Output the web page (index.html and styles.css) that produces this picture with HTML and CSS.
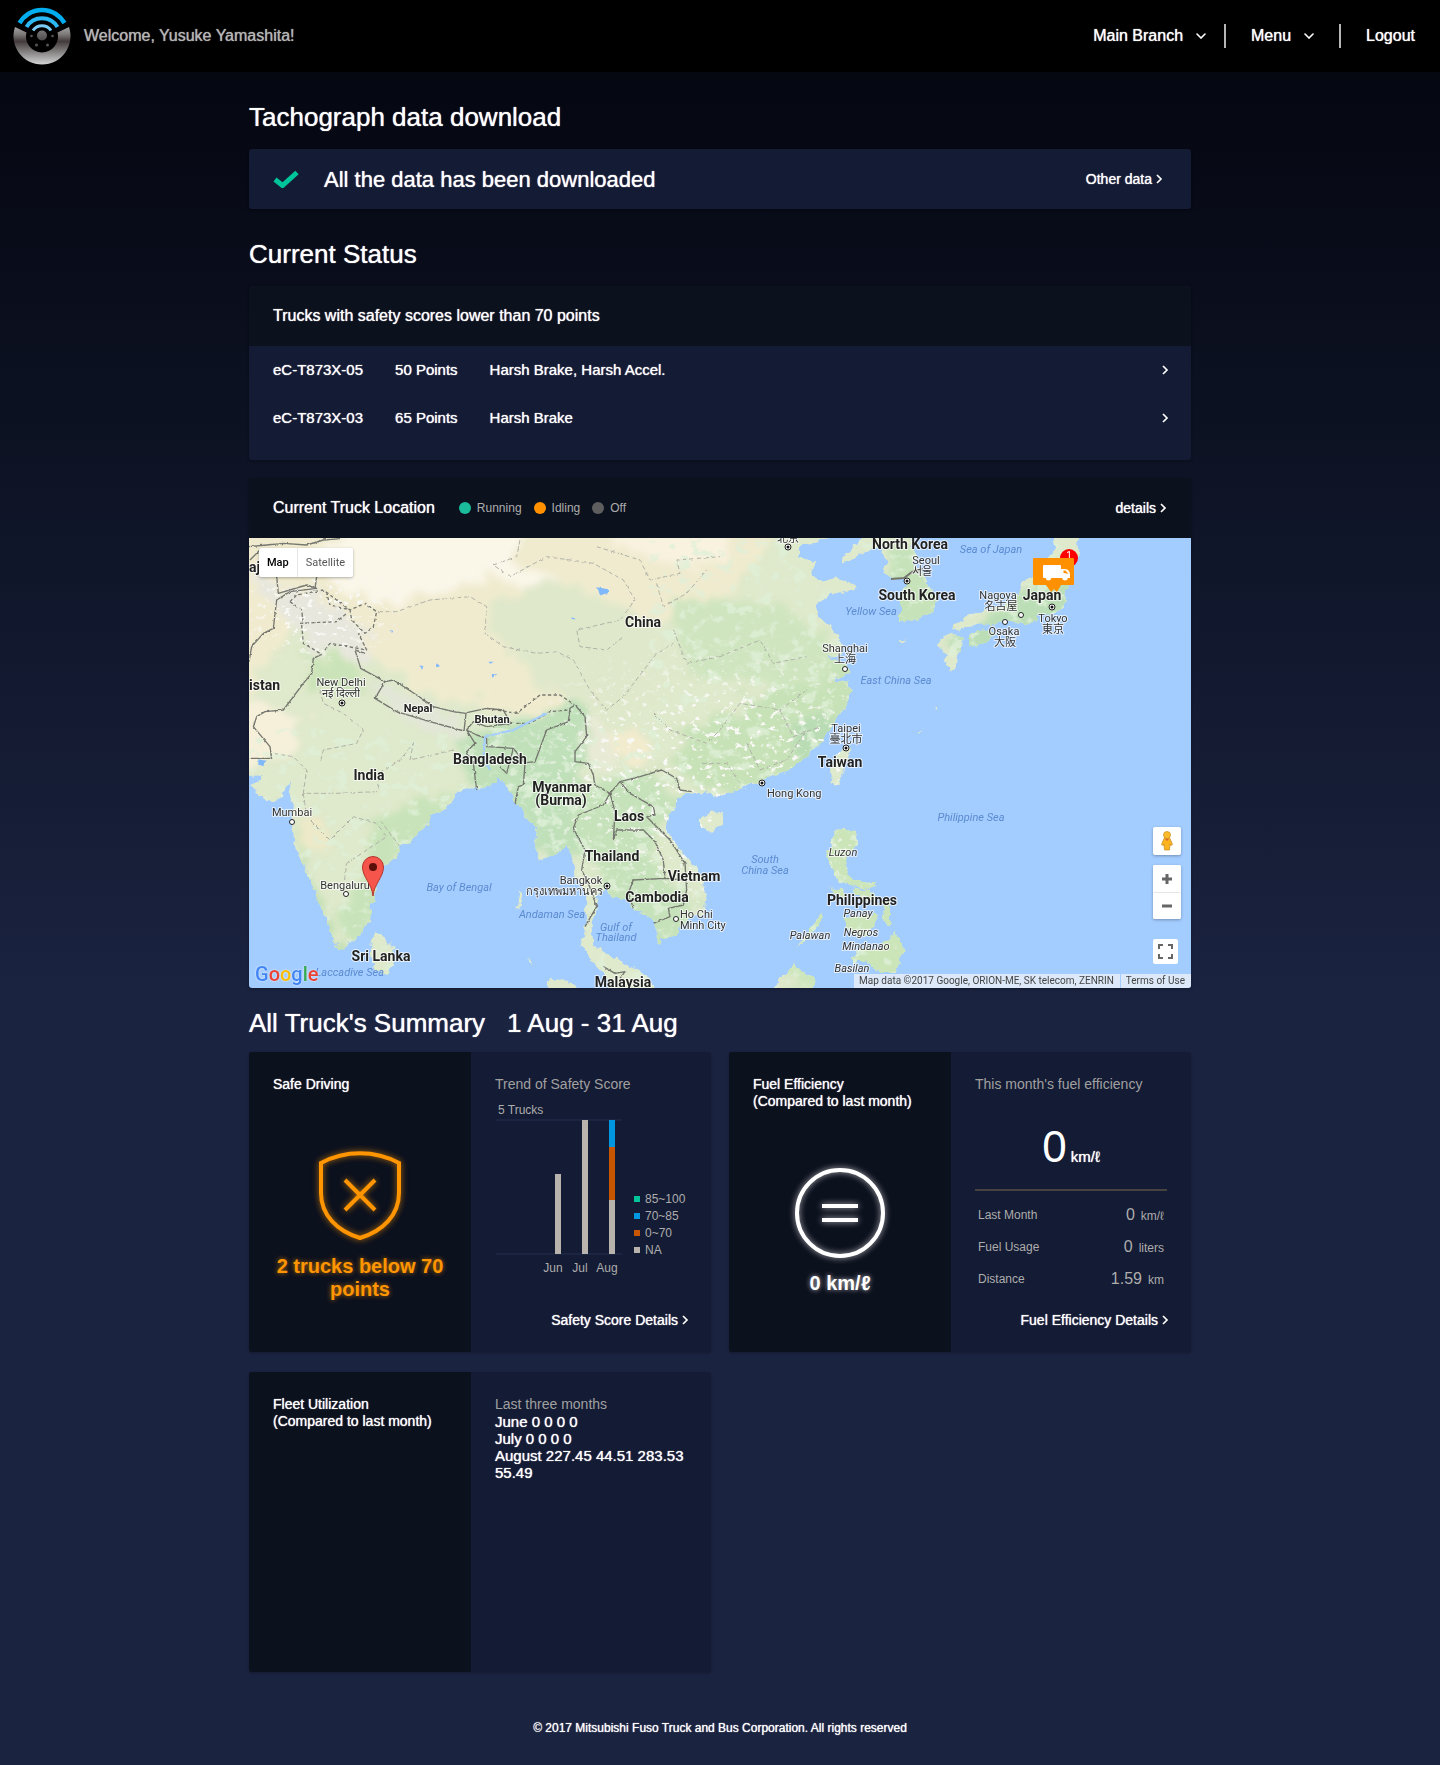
FILE: index.html
```html
<!DOCTYPE html>
<html lang="en">
<head>
<meta charset="utf-8">
<meta name="viewport" content="width=device-width, initial-scale=1">
<title>Fleet dashboard</title>
<link rel="stylesheet" href="styles.css">
</head>
<body>
<svg class="defs" width="0" height="0" aria-hidden="true">
  <symbol id="chev-right" viewBox="0 0 7 10"><path d="M1 1l4 4-4 4" fill="none" stroke="currentColor" stroke-width="1.700"/></symbol>
  <symbol id="chev-down" viewBox="0 0 10 6"><path d="M1 1l4 4 4-4" fill="none" stroke="currentColor" stroke-width="1.600" stroke-linecap="round"/></symbol>
</svg>

<header class="topbar">
  <svg class="logo" viewBox="0 0 58 58" role="img" aria-label="Logo">
    <defs>
      <linearGradient id="steel" x1="0" y1="0" x2="0" y2="1">
        <stop offset="0" stop-color="#a2a2a2"/><stop offset=".2" stop-color="#7c7878"/><stop offset=".38" stop-color="#423a3a"/><stop offset=".62" stop-color="#7a7777"/><stop offset="1" stop-color="#d6d6d6"/>
      </linearGradient>
      <linearGradient id="hub" x1="0" y1="0" x2="0" y2="1"><stop offset="0" stop-color="#777"/><stop offset="1" stop-color="#4d4949"/></linearGradient>
    </defs>
    <path d="M2 20A28.500 28.500 0 1 0 56 20L44.500 25.500A16 16 0 1 1 13.500 25.500Z" fill="url(#steel)"/>
    <g fill="none">
      <path d="M6.500 16A26 26 0 0 1 51.500 16" stroke="#00aeef" stroke-width="4.500"/>
      <path d="M13.500 20A18 18 0 0 1 44.500 20" stroke="#2cb8f2" stroke-width="4"/>
      <path d="M20 23.500A11 11 0 0 1 38 23.500" stroke="#7accf6" stroke-width="3"/>
    </g>
    <circle cx="29" cy="28.500" r="5" fill="url(#hub)"/>
    <g fill="#555"><circle cx="18.500" cy="29" r="1.300"/><circle cx="39.500" cy="29" r="1.300"/><circle cx="23.500" cy="38" r="1.500"/><circle cx="34.500" cy="38" r="1.500"/></g>
  </svg>
  <p class="welcome">Welcome, Yusuke Yamashita!</p>
  <nav class="nav">
    <button class="nav-item" type="button">Main Branch<svg class="chev-down"><use href="#chev-down"/></svg></button>
    <button class="nav-item" type="button">Menu<svg class="chev-down"><use href="#chev-down"/></svg></button>
    <a class="nav-item" href="#">Logout</a>
  </nav>
</header>

<main class="page">
  <h2 class="heading">Tachograph data download</h2>
  <section class="card download">
    <svg class="check" viewBox="0 0 26 18"><path d="M2 9.500l7.500 6L24 2.500" fill="none" stroke="#00c49a" stroke-width="5"/></svg>
    <p class="download-text">All the data has been downloaded</p>
    <a class="more" href="#">Other data<svg class="chev-right"><use href="#chev-right"/></svg></a>
  </section>

  <h2 class="heading">Current Status</h2>
  <section class="card">
    <header class="card-head"><h3 class="card-title">Trucks with safety scores lower than 70 points</h3></header>
    <ul class="trucks">
      <li><a class="truck" href="#"><span>eC-T873X-05</span><span>50 Points</span><span>Harsh Brake, Harsh Accel.</span><svg class="chev-right"><use href="#chev-right"/></svg></a></li>
      <li><a class="truck" href="#"><span>eC-T873X-03</span><span>65 Points</span><span>Harsh Brake</span><svg class="chev-right"><use href="#chev-right"/></svg></a></li>
    </ul>
  </section>

  <section class="card location">
    <header class="card-head">
      <h3 class="card-title">Current Truck Location</h3>
      <ul class="states">
        <li class="state"><i class="dot running"></i>Running</li>
        <li class="state"><i class="dot idling"></i>Idling</li>
        <li class="state"><i class="dot off"></i>Off</li>
      </ul>
      <a class="more" href="#">details<svg class="chev-right"><use href="#chev-right"/></svg></a>
    </header>
    <div class="map">
      <svg class="map-canvas" viewBox="0 0 942 450" preserveAspectRatio="xMidYMid slice" role="img" aria-label="Map of Asia">
        <defs>
          <filter id="rough" x="-5%" y="-5%" width="110%" height="110%"><feTurbulence type="fractalNoise" baseFrequency=".12" numOctaves="3" seed="4"/><feDisplacementMap in="SourceGraphic" scale="9" xChannelSelector="R" yChannelSelector="G"/></filter>
          <filter id="border-rough" x="-5%" y="-5%" width="110%" height="110%"><feTurbulence type="fractalNoise" baseFrequency=".09" numOctaves="2" seed="7"/><feDisplacementMap in="SourceGraphic" scale="8" xChannelSelector="R" yChannelSelector="G"/></filter>
          <filter id="ragged" x="-5%" y="-5%" width="110%" height="110%"><feTurbulence type="fractalNoise" baseFrequency=".05" numOctaves="4" seed="9"/><feDisplacementMap in="SourceGraphic" scale="36" xChannelSelector="R" yChannelSelector="G"/><feGaussianBlur stdDeviation="3"/></filter>
          <filter id="speckle-green" x="0" y="0" width="100%" height="100%"><feTurbulence type="fractalNoise" baseFrequency=".07 .09" numOctaves="4" seed="12"/><feColorMatrix values="0 0 0 0 .74  0 0 0 0 .87  0 0 0 0 .69  6 0 0 0 -3.300"/><feComposite in2="SourceGraphic" operator="in"/></filter>
          <filter id="speckle-light" x="0" y="0" width="100%" height="100%"><feTurbulence type="fractalNoise" baseFrequency=".14 .18" numOctaves="3" seed="31"/><feColorMatrix values="0 0 0 0 .94  0 0 0 0 .94  0 0 0 0 .9  0 10 0 0 -6.200"/><feComposite in2="SourceGraphic" operator="in"/></filter>
          <radialGradient id="fade"><stop offset=".5" stop-color="#fff"/><stop offset="1" stop-color="#fff" stop-opacity="0"/></radialGradient>
          <g id="land">
            <path transform="translate(-9 -8) scale(.33333)" d="M-60 -40V738H27L70 735 65 752 30 765 60 800 95 815 130 800 138 765 152 762 145 790 155 800 155 870 165 950 190 1000 215 1060 240 1130 270 1200 290 1245 315 1262 325 1235 365 1215 370 1195 390 1180 392 1130 408 1090 400 1040 430 1010 475 970 480 950 540 910 575 860 605 845 635 815 640 790 680 775 740 775 770 755 765 740 780 745 800 765 810 790 825 820 850 845 870 880 890 900 885 960 900 990 960 970 980 945 990 960 1000 1010 1020 1060 1045 1110 1035 1180 1025 1250 1045 1280 1075 1310 1100 1345 1110 1400H1250L1225 1340 1180 1310 1150 1300 1110 1280 1090 1260 1060 1245 1055 1190 1070 1130 1065 1100 1100 1070 1115 1100 1155 1110 1180 1140 1210 1150 1240 1165 1250 1200 1250 1240 1300 1215 1340 1170 1395 1145 1400 1090 1380 1030 1330 970 1280 900 1285 860 1310 810 1345 790 1400 780 1420 800 1460 790V-40Z"/>
            <path transform="translate(471 -68) scale(.33333 .33806)" d="M-30 150V945L0 960 70 940 130 915 200 890 260 850 310 800 345 740 375 710 390 660 385 625 340 625 390 600 380 570 320 555 370 545 360 500 330 460 300 440 290 400 330 370 410 350 400 335 340 320 310 330 270 310 290 270 240 255 240 220 290 215 345 190V150Z M430 150V201L375 250 370 275 420 250 460 235 480 230 500 265 490 310 530 320 560 330 540 380 540 450 600 440 640 420 650 380 610 310 580 280 590 250 570 201V150Z"/>
            <g transform="translate(-9 -8) scale(.33333)">
              <path d="M400 1205L430 1215 460 1260 462 1300 440 1325 405 1330 395 1280Z"/>
              <path d="M1380 870L1410 848 1445 845 1455 860 1440 885 1410 905 1380 890Z"/>
              <path d="M920 1350L980 1352 1015 1374 1010 1400H930Z"/>
              <path d="M838 1080l6 15-6 40-8 5zM868 1285l6 10-3 6zM1095 1300l8 20-8 10z"/>
            </g>
            <g transform="translate(471 -68) scale(.33333 .33806)">
              <path d="M1000 150L1005 230 960 300 905 335 890 370 850 400 790 420 750 430 700 465 710 475 770 455 830 460 850 440 900 455 950 445 960 430 1000 425 1030 400 1040 340 1075 240 1065 150Z"/>
              <path d="M655 510L700 480 730 500 715 545 710 585 690 595 675 580 680 550 660 530Z"/>
              <path d="M750 490L790 470 830 485 800 505 770 525 750 515Z"/>
              <path d="M378 815L390 830 375 880 352 935 328 905 340 860Z"/>
              <path d="M345 1062L405 1068 412 1110 380 1140 378 1180 400 1215 470 1225 450 1240 400 1230 350 1215 335 1180 318 1150 335 1110Z"/>
              <path d="M330 1235l40 5 10 22-40-5zM400 1235l60 10 15 40-50-10zM370 1320l70-10 25 20-30 50-45-10zM490 1270l20 5 0 70-20 0zM460 1310l20 10-30 40zM230 1410l75-95 10 5-60 80zM395 1455l25-40 60 0 50-50 20 60-20 60-50 0-40-30zM160 1540l25-40 40-40 40 40 30 10-30 30z"/>
              <path d="M535 503l25-5-15 12zM640 703l10-5-5 12zM588 780l18-18-8 15zM320 1300l6 8zM640 455l8 8z"/>
            </g>
          </g>
          <mask id="land-mask"><use href="#land" fill="#fff" filter="url(#rough)"/></mask>
          <mask id="hills-mask"><ellipse cx="470" cy="240" rx="230" ry="150" fill="url(#fade)"/><ellipse cx="70" cy="75" rx="90" ry="55" fill="url(#fade)"/></mask>
        </defs>
        <rect x="-60" y="-60" width="1062" height="570" fill="#a3ccff"/>
        <use href="#land" fill="#dfe9cb" filter="url(#rough)"/>
        <g mask="url(#land-mask)">
          <g filter="url(#ragged)">
            <path d="M-30-30H560L470 60 400 90 340 130 380 165 300 180 190 160 120 120 40 90 0 160-30 160Z" fill="#f0ebcf"/>
            <path d="M110-20H275L260 30 200 50 130 65 90 50 60 20Z" fill="#faf6e8"/>
            <path d="M250 20L310 35 330 60 280 60 245 40Z" fill="#faf6e8"/>
            <path d="M-20 170L20 170 60 180 40 220 0 225Z" fill="#f6f0da"/>
            <path d="M350-20H480V20L420 30 380 10Z" fill="#f8f2df"/>
            <path d="M0 40L70 55 120 100 125 130 80 115 40 90Z" fill="#e8e7de"/>
            <path d="M120 140L170 160 220 190 210 198 150 180Z" fill="#e2e6d8"/>
            <path d="M240 70L300 40 400 80 430 120 390 170 340 180 300 150 250 110Z" fill="#e0e8cb"/>
            <path d="M320 160L360 190 380 220 350 230 330 190Z" fill="#e9ead6"/>
            <path d="M360 185L395 195 400 230 370 225Z" fill="#f3ebce"/>
            <path d="M210 200L340 160 335 250 350 300 300 330 270 270 220 255Z" fill="#bfe0b9"/>
            <path d="M320 250L400 230 430 260 400 320 450 370 420 420 350 350 330 310Z" fill="#c6e2ba"/>
            <path d="M60 110L100 125 130 150 60 150Z" fill="#cbe3b8"/>
            <path d="M120 280L210 250 190 290 150 320 130 370 110 420 90 380 120 330Z" fill="#c8e3b9"/>
            <path d="M45 280L60 340 95 420 80 420 50 350Z" fill="#c3e0b4"/>
            <path d="M50 270L80 300 70 320 50 310Z" fill="#eee9c8"/>
            <path d="M430 200L600 110 620 160 560 240 480 260 420 230Z" fill="#c8e2b8"/>
            <path d="M540 190L580 170 580 210 550 230Z" fill="#b9dcb4"/>
            <path d="M420 60L540 70 600 120 560 150 440 140Z" fill="#cfe5bf"/>
            <path d="M640 0L700 40 700 90 640 90Z" fill="#c5e2b9"/>
            <path d="M700 100L830 20 850 0 820 90 740 130Z" fill="#bbdeb6"/>
            <path d="M560 280H670V450H540Z" fill="#cbe5b9"/>
          </g>
          <g opacity=".8">
            <rect x="0" y="190" width="942" height="260" filter="url(#speckle-green)"/>
            <rect x="400" y="0" width="542" height="190" filter="url(#speckle-green)"/>
          </g>
          <g mask="url(#hills-mask)"><rect x="0" y="0" width="942" height="450" filter="url(#speckle-light)"/></g>
        </g>
        <g transform="translate(-9 -8) scale(.33333)" fill="none" stroke-linejoin="round" filter="url(#border-rough)">
          <g stroke="#b0b2a7" stroke-width="3" stroke-dasharray="14 8">
            <path d="M415 245L470 245 570 210 690 200 740 230 735 310 790 350 890 370 950 365 1000 390 1050 480 1100 540 1150 500 1250 370 1300 340"/>
            <path d="M840 30L830 80 760 105 810 140 920 80 1060 100 1150 150 1185 210 1140 270 1010 300 1020 350 1100 360 1150 320"/>
            <path d="M1070 50L1200 90 1230 150 1320 130 1310 90 1440 80M1250 160L1270 230 1340 190 1400 120M1300 300L1340 400 1440 380M1240 550L1290 600 1400 640 1440 600"/>
            <path d="M1440 380L1560 330 1600 400 1700 380M1440 600L1500 520 1620 540 1700 480M1520 640L1560 720 1640 690 1700 600M1500 760L1460 700 1380 700M1620 540L1660 620 1740 590"/>
            <path d="M100 670L160 680 200 720 190 790 290 790 410 785 420 730 480 690 520 640 510 690 640 660M190 790L200 860 270 930 340 860 410 880 440 920 320 1000 310 1080M420 870L480 950M240 480L250 520 310 550 370 600 350 640 250 660 240 700"/>
          </g>
          <g stroke="#75776f" stroke-width="4">
            <path d="M27 395L35 350 70 310 100 295 110 210 150 185 230 175 200 165 115 190 110 140"/>
            <path d="M230 140L225 175"/><path d="M27 50L80 45 130 40 200 45 250 30 300 26M30 90L60 60 110 60"/>
            <path d="M27 685L95 685 90 650 40 590 50 560 75 545 130 540 190 460 215 430 220 385 245 373"/>
            <path d="M345 360L375 370M345 360L362 415 435 455 405 505 470 545 570 575 672 603 678 550 640 545 580 530 530 495 460 450 435 455"/>
            <path d="M680 548L740 535 790 540 812 580 740 590 700 575 680 600 710 615 740 625 740 650 820 655 855 700 850 765 835 770 825 820M680 600L705 640 680 665 700 700 710 780M820 655L800 730 780 710"/>
            <path d="M860 698L885 695 920 600 985 575 990 535 1005 525 1035 560 1040 620 1005 665 1005 695 1045 700 1060 735 1065 765 1110 790 1090 825 1015 855 1000 895 1035 960 1025 1020 1045 1060 1070 1130 1035 1190"/>
            <path d="M1110 790L1140 755 1200 740 1265 720 1310 745 1320 780 1355 785M1140 755L1170 790 1240 830 1245 855 1220 860 1290 930 1335 1000 1340 1080 1330 1125 1285 1135 1290 1160 1240 1180M1120 930L1130 900 1210 900 1245 935 1270 990 1275 1045 1180 1050 1165 1090 1180 1135M1110 790L1125 845 1120 930M1275 1045L1335 1050"/>
            <path d="M1090 1310L1125 1330 1155 1325 1140 1345"/>
          </g>
          <g stroke="#77786f" stroke-width="4" stroke-dasharray="10 7">
            <path d="M150 215L170 195 250 180 330 240 375 220 410 245 400 290 375 310 335 270 330 240 270 225 260 190M180 280L290 275 320 250M185 285L190 340 245 373M255 360L270 340 380 360 355 310M150 215L185 240 190 280M740 535L830 550 900 495 960 495 1005 525M812 580L870 580 930 545 985 540"/>
          </g>
          <path d="M735 620L820 600 920 550M735 620L730 680 750 720" stroke="#a3ccff" stroke-width="6"/>
          <path d="M1072 172l32 6 0 12-24 6zM995 262l12 4-12 4zM590 400l10 8-12 4zM755 435l18-4-16 12zM55 688l22 4-8 16-14-4zM540 405l10 4-4 8zM450 300l8 2-4 6zM745 395l16 0-10 6z" fill="#7fb8fb"/>
        </g>
        <path d="M642 41L655 40 663 34 674 31" fill="none" stroke="#75776f" stroke-width="2"/>

        <g class="sea">
          <text x="210" y="353">Bay of Bengal</text><text x="303" y="380">Andaman Sea</text><text x="367" y="393">Gulf of</text><text x="367" y="403">Thailand</text>
          <text class="at-end" x="135" y="438">Laccadive Sea</text><text x="742" y="15">Sea of Japan</text><text x="622" y="77">Yellow Sea</text><text x="647" y="146">East China Sea</text>
          <text x="722" y="283">Philippine Sea</text><text x="516" y="325">South</text><text x="516" y="336">China Sea</text>
        </g>
        <g class="isle">
          <text x="594" y="318">Luzon</text><text x="609" y="379">Panay</text><text x="561" y="401">Palawan</text><text x="612" y="398">Negros</text><text x="617" y="412">Mindanao</text><text x="603" y="434">Basilan</text>
        </g>
        <g class="city">
          <text x="92" y="148">New Delhi</text><text x="92" y="159">नई दिल्ली</text><text x="43" y="278">Mumbai</text><text x="96" y="351">Bengaluru</text>
          <text x="332" y="346">Bangkok</text><text x="315" y="357">กรุงเทพมหานคร</text><text class="at-start" x="431" y="380">Ho Chi</text><text class="at-start" x="431" y="391">Minh City</text>
          <text x="539" y="4">北京</text><text x="677" y="26">Seoul</text><text x="673" y="37">서울</text><text x="749" y="61">Nagoya</text><text x="752" y="72">名古屋</text>
          <text x="755" y="97">Osaka</text><text x="756" y="108">大阪</text><text x="804" y="84">Tokyo</text><text x="804" y="95">東京</text><text x="596" y="114">Shanghai</text><text x="596" y="125">上海</text>
          <text x="597" y="194">Taipei</text><text x="597" y="205">臺北市</text><text class="at-start" x="518" y="259">Hong Kong</text>
        </g>
        <g class="country">
          <text class="at-start" x="0" y="34">aj</text><text class="at-start" x="0" y="152">istan</text><text x="394" y="89">China</text><text class="small" x="169" y="174">Nepal</text><text class="small" x="243" y="185">Bhutan</text>
          <text x="241" y="226">Bangladesh</text><text x="120" y="242">India</text><text x="313" y="254">Myanmar</text><text x="312" y="267">(Burma)</text><text x="380" y="283">Laos</text>
          <text x="363" y="323">Thailand</text><text x="445" y="343">Vietnam</text><text x="408" y="364">Cambodia</text><text x="132" y="423">Sri Lanka</text><text x="374" y="449">Malaysia</text>
          <text x="661" y="11">North Korea</text><text x="668" y="62">South Korea</text><text x="793" y="62">Japan</text><text x="591" y="229">Taiwan</text><text x="613" y="367">Philippines</text>
        </g>
        <g fill="#fff" stroke="#222">
          <circle cx="43" cy="284" r="2.500"/><circle cx="97" cy="356" r="2.500"/><circle cx="427" cy="381" r="2.500"/><circle cx="596" cy="131" r="2.500"/><circle cx="772" cy="77" r="2.500"/><circle cx="756" cy="84" r="2.500"/>
          <circle cx="93" cy="165" r="3"/><circle cx="358" cy="348" r="3"/><circle cx="539" cy="9" r="3"/><circle cx="658" cy="43" r="3"/><circle cx="803" cy="69" r="3"/><circle cx="597" cy="210" r="3"/><circle cx="513" cy="245" r="3"/>
        </g>
        <g fill="#111"><circle cx="93" cy="165" r="1.500"/><circle cx="358" cy="348" r="1.500"/><circle cx="539" cy="9" r="1.500"/><circle cx="658" cy="43" r="1.500"/><circle cx="803" cy="69" r="1.500"/><circle cx="597" cy="210" r="1.500"/><circle cx="513" cy="245" r="1.500"/></g>

        <path d="M124 358C123 346 113.500 339 113.500 329A10.500 10.500 0 0 1 134.500 329C134.500 339 125 346 124 358Z" fill="#f5554a" stroke="#b5342b"/>
        <circle cx="124" cy="329" r="4" fill="#5c0f0b"/>
        <circle cx="820" cy="20" r="9" fill="#f00"/><text class="badge" x="820" y="21">1</text>
        <path d="M785 20H824a1 1 0 0 1 1 1V46a1 1 0 0 1-1 1H812L808 54 805 51 802 54 797 47H785a1 1 0 0 1-1-1V21a1 1 0 0 1 1-1Z" fill="#ff9100"/>
        <path d="M795 27H811a1 1 0 0 1 1 1V31H816C819 31 821 34 821 36V40H795a1 1 0 0 1-1-1V28a1 1 0 0 1 1-1Z" fill="#fff"/>
        <circle cx="799.500" cy="39.700" r="2.700" fill="#fff"/><circle cx="816" cy="39.700" r="2.700" fill="#fff"/>
        <path d="M814.500 32.500h2l3 3.200-5-.7z" fill="#ff9100"/>
      </svg>
      <div class="map-type"><button class="type-btn active" type="button">Map</button><button class="type-btn" type="button">Satellite</button></div>
      <div class="map-tools">
        <button class="tool" type="button" aria-label="Street View">
          <svg width="14" height="20" viewBox="0 0 14 20"><circle cx="7" cy="4" r="3.500" fill="#fbbc2c" stroke="#c98a1b" stroke-width=".7"/><path d="M4 7.500h6l2.500 6-1.800 1L10 13l-.5 6h-5L4 13l-.7 1.500-1.800-1z" fill="#fbb320" stroke="#c98a1b" stroke-width=".7"/><path d="M5 8h4l-2 2z" fill="#e2662b"/></svg>
        </button>
        <div class="zoomer">
          <button class="tool" type="button" aria-label="Zoom in"><svg width="12" height="12"><path d="M6 1v10M1 6h10" stroke="#666" stroke-width="3"/></svg></button>
          <button class="tool" type="button" aria-label="Zoom out"><svg width="12" height="12"><path d="M1 6h10" stroke="#666" stroke-width="3"/></svg></button>
        </div>
        <button class="tool full" type="button" aria-label="Full screen"><svg width="15" height="15"><path d="M1 5V1h4M10 1h4v4M14 10v4h-4M5 14H1v-4" fill="none" stroke="#666" stroke-width="2"/></svg></button>
      </div>
      <p class="google"><span class="g-blue">G</span><span class="g-red">o</span><span class="g-yellow">o</span><span class="g-blue">g</span><span class="g-green">l</span><span class="g-red">e</span></p>
      <div class="credits"><span class="credit">Map data ©2017 Google, ORION-ME, SK telecom, ZENRIN</span><a class="credit" href="#">Terms of Use</a></div>
    </div>
  </section>

  <h2 class="heading summary-heading"><span>All Truck's Summary</span><span>1 Aug - 31 Aug</span></h2>
  <div class="summary">
    <section class="card tile">
      <div class="tile-main">
        <h3 class="tile-title">Safe Driving</h3>
        <div class="verdict warn">
          <svg class="glyph" viewBox="0 0 90 90"><path d="M6 12C30-1 60-1 84 12V42C84 64 68 80 45 87 22 80 6 64 6 42ZM30 29L60 59M60 29L30 59" fill="none" stroke="currentColor" stroke-width="4"/></svg>
          <p>2 trucks below 70 points</p>
        </div>
      </div>
      <div class="tile-side">
        <h4 class="side-title">Trend of Safety Score</h4>
        <svg class="chart" viewBox="0 0 192 175">
          <path d="M1 20h126M1 154h126" stroke="#1b2542" stroke-width="2"/>
          <g fill="#b9b3ae"><path d="M60 74h6v80h-6zM87 20h6v134h-6zM114 100h6v54h-6z"/><path d="M139 147h6v6h-6z"/></g>
          <path d="M114 47h6v53h-6zM139 130h6v6h-6z" fill="#c85600"/>
          <path d="M114 20h6v27h-6zM139 113h6v6h-6z" fill="#0096e0"/>
          <path d="M139 96h6v6h-6z" fill="#00c49a"/>
          <text x="3" y="14">5 Trucks</text>
          <text class="mid" x="58" y="172">Jun</text><text class="mid" x="85" y="172">Jul</text><text class="mid" x="112" y="172">Aug</text>
          <text x="150" y="103">85~100</text><text x="150" y="120">70~85</text><text x="150" y="137">0~70</text><text x="150" y="154">NA</text>
        </svg>
        <a class="more side-link" href="#">Safety Score Details<svg class="chev-right"><use href="#chev-right"/></svg></a>
      </div>
    </section>

    <section class="card tile">
      <div class="tile-main">
        <h3 class="tile-title">Fuel Efficiency<br>(Compared to last month)</h3>
        <div class="verdict">
          <svg class="glyph" viewBox="0 0 90 90"><circle cx="45" cy="45" r="43" fill="none" stroke="currentColor" stroke-width="4"/><path d="M27 38h36M27 52h36" stroke="currentColor" stroke-width="4"/></svg>
          <p>0 km/ℓ</p>
        </div>
      </div>
      <div class="tile-side">
        <h4 class="side-title">This month's fuel efficiency</h4>
        <p class="big"><span class="big-num">0</span> km/ℓ</p>
        <table class="stats">
          <tr><th scope="row">Last Month</th><td><b>0</b>km/ℓ</td></tr>
          <tr><th scope="row">Fuel Usage</th><td><b>0</b>liters</td></tr>
          <tr><th scope="row">Distance</th><td><b>1.59</b>km</td></tr>
        </table>
        <a class="more side-link" href="#">Fuel Efficiency Details<svg class="chev-right"><use href="#chev-right"/></svg></a>
      </div>
    </section>

    <section class="card tile">
      <div class="tile-main"><h3 class="tile-title">Fleet Utilization<br>(Compared to last month)</h3></div>
      <div class="tile-side">
        <h4 class="side-title">Last three months</h4>
        <ul class="months"><li>June 0 0 0 0</li><li>July 0 0 0 0</li><li>August 227.45 44.51 283.53 55.49</li></ul>
      </div>
    </section>
  </div>
</main>

<footer class="footer">© 2017 Mitsubishi Fuso Truck and Bus Corporation. All rights reserved</footer>
</body>
</html>
```

FILE: styles.css
```css
* { box-sizing: border-box; }

body {
  margin: 0;
  min-height: 100vh;
  background: #1a2340 linear-gradient(#03050d, #1a2340 1000px) no-repeat;
  color: #fff;
  font: 16px/20px "Liberation Sans", Arial, sans-serif;
  text-shadow: 0 0 1px currentColor;
}

h2, h3, h4, p, ul { margin: 0; padding: 0; font-weight: 400; }
ul { list-style: none; }
a { color: inherit; text-decoration: none; }
button { border: 0; padding: 0; background: none; color: inherit; font: inherit; text-shadow: inherit; cursor: pointer; }
.defs { position: absolute; }
.chev-right { width: 7px; height: 10px; flex: none; }
.chev-down { width: 10px; height: 6px; }

.topbar {
  display: flex;
  align-items: center;
  height: 72px;
  padding: 0 0 0 13px;
  background: #000;
}
.logo { width: 58px; height: 58px; }
.welcome { margin-left: 13px; color: #b5b5b5; }
.nav { display: flex; margin-left: auto; }
.nav-item {
  display: flex;
  align-items: center;
  gap: 13px;
  height: 24px;
  padding: 0 25px;
}
.nav-item:first-child { padding-right: 18px; }
.nav-item + .nav-item { border-left: 2px solid #b5b5b5; }

.page { max-width: 942px; margin: 0 auto; }
.heading { padding: 29px 0 16px; font-size: 26px; line-height: 32px; }
.card { border-radius: 3px; background: #141b34; box-shadow: 0 1px 3px rgba(0, 0, 0, .3); overflow: hidden; }

.download { display: flex; align-items: center; height: 60px; padding: 0 28px 0 24px; }
.check { width: 26px; height: 18px; }
.download-text { margin-left: 25px; padding-top: 2px; font-size: 22px; line-height: 28px; }
.more {
  display: flex;
  align-items: center;
  gap: 4px;
  margin-left: auto;
  font-size: 14px;
  line-height: 20px;
}

.card-head { display: flex; align-items: center; height: 60px; padding: 0 24px; background: #0c111e; }
.card-title { font-size: 16px; }
.trucks { padding-bottom: 18px; }
.truck { display: flex; align-items: center; gap: 32px; height: 48px; padding: 0 22px 0 24px; font-size: 15px; }
.truck .chev-right { margin-left: auto; }

.location { margin-top: 18px; }
.states { display: flex; gap: 12px; margin-left: 24px; text-shadow: none; }
.state { display: flex; align-items: center; gap: 6px; color: #adadad; font-size: 12px; }
.dot { width: 12px; height: 12px; border-radius: 50%; }
.running { background: #1abc9c; }
.idling { background: #ff9100; }
.off { background: #5e5e5e; }

.map { position: relative; height: 450px; text-shadow: none; }
.map-canvas {
  display: block;
  width: 100%;
  height: 100%;
  font-family: Roboto, "Noto Sans CJK JP", "Noto Sans", sans-serif;
  text-anchor: middle;
}
.map-canvas text { paint-order: stroke; stroke: rgba(255, 255, 255, .7); stroke-width: 2px; stroke-linejoin: round; }
.map-canvas .at-start { text-anchor: start; }
.map-canvas .at-end { text-anchor: end; }
.map-canvas .badge { stroke: none; fill: #fff; font-size: 10px; }
.country { fill: #222; font-size: 14px; font-weight: 700; }
.country .small { font-size: 11px; }
.city { fill: #333; font-size: 11px; }
.isle { fill: #333; font-size: 11px; font-style: italic; }
.sea { fill: #5b8bd0; font-size: 11px; font-style: italic; }
.map-canvas .sea text { stroke: none; }

.map-type, .map-tools, .credits { font-family: Roboto, sans-serif; }
.map-type {
  position: absolute;
  left: 10px;
  top: 10px;
  display: flex;
  border-radius: 2px;
  background: #fff;
  box-shadow: 0 1px 3px rgba(0, 0, 0, .3);
}
.type-btn { height: 29px; padding: 0 8px; color: #565656; font-size: 11px; }
.type-btn.active { border-right: 1px solid #e6e6e6; color: #000; font-weight: 500; }
.map-tools { position: absolute; right: 10px; bottom: 24px; display: flex; flex-direction: column; gap: 10px; }
.tool {
  display: grid;
  place-items: center;
  width: 28px;
  height: 28px;
  border-radius: 2px;
  background: #fff;
  box-shadow: 0 1px 3px rgba(0, 0, 0, .3);
}
.zoomer { border-radius: 2px; background: #fff; box-shadow: 0 1px 3px rgba(0, 0, 0, .3); }
.zoomer .tool { height: 27px; box-shadow: none; }
.zoomer .tool + .tool { border-top: 1px solid #e6e6e6; }
.full { width: 25px; height: 25px; margin-top: 10px; box-shadow: none; }
.google {
  position: absolute;
  left: 6px;
  bottom: 2px;
  font: 500 20px/24px Roboto, sans-serif;
  text-shadow: 0 0 2px #fff;
}
.g-blue { color: #4285f4; }
.g-red { color: #ea4335; }
.g-yellow { color: #fbbc05; }
.g-green { color: #34a853; }
.credits { position: absolute; right: 0; bottom: 0; display: flex; gap: 1px; color: #444; font-size: 10px; line-height: 14px; }
.credit { padding: 0 6px 0 5px; background: rgba(245, 245, 245, .7); }

.summary-heading { display: flex; gap: 22px; padding: 19px 0 13px; }
.summary { display: grid; grid-template-columns: repeat(auto-fill, minmax(440px, 1fr)); gap: 20px 18px; }
.tile { display: grid; grid-template-columns: 222px minmax(0, 1fr); min-height: 300px; }
.tile-main { display: flex; flex-direction: column; padding: 24px 24px 0; background: #0c111e; }
.tile-title { font-size: 14px; line-height: 17px; }
.verdict {
  flex: 1;
  display: flex;
  flex-direction: column;
  align-items: center;
  justify-content: center;
  gap: 14px;
  font-size: 20px;
  line-height: 23px;
  text-align: center;
  text-shadow: 0 0 5px rgba(255, 255, 255, .7);
}
.verdict p { font-weight: 700; }
.glyph { width: 90px; height: 90px; overflow: visible; filter: drop-shadow(0 0 3px rgba(255, 255, 255, .7)); }
.warn { padding-top: 6px; color: #ff9500; text-shadow: 0 0 5px rgba(255, 149, 0, .7); }
.warn .glyph { filter: drop-shadow(0 0 3px rgba(255, 149, 0, .7)); }
.tile-side { display: flex; flex-direction: column; padding: 24px 24px 22px; }
.side-title { color: #a0a0a0; font-size: 14px; line-height: 17px; text-shadow: none; }
.side-link { margin-right: -2px; }
.tile-side .more { margin-top: auto; }
.chart { width: 192px; height: 175px; margin-top: 7px; overflow: visible; fill: #adadad; font-size: 12px; text-shadow: none; }
.mid { text-anchor: middle; }
.big { margin-top: 30px; font-size: 15px; line-height: 48px; text-align: center; }
.big-num { font-size: 44px; text-shadow: none; }
.stats { margin-top: 8px; border-top: 2px solid #45423f; border-spacing: 0; color: #adadad; font-size: 12px; text-shadow: none; }
.stats th, .stats td { height: 32px; padding: 0 3px; font-weight: 400; text-align: left; }
.stats tr:first-child > * { height: 40px; padding-top: 8px; }
.stats td { text-align: right; }
.stats b { margin-right: 6px; font-size: 16px; font-weight: 400; }
.months { font-size: 15px; line-height: 17px; }

.footer { padding: 48px 0 29px; font-size: 12px; line-height: 16px; text-align: center; }
```
